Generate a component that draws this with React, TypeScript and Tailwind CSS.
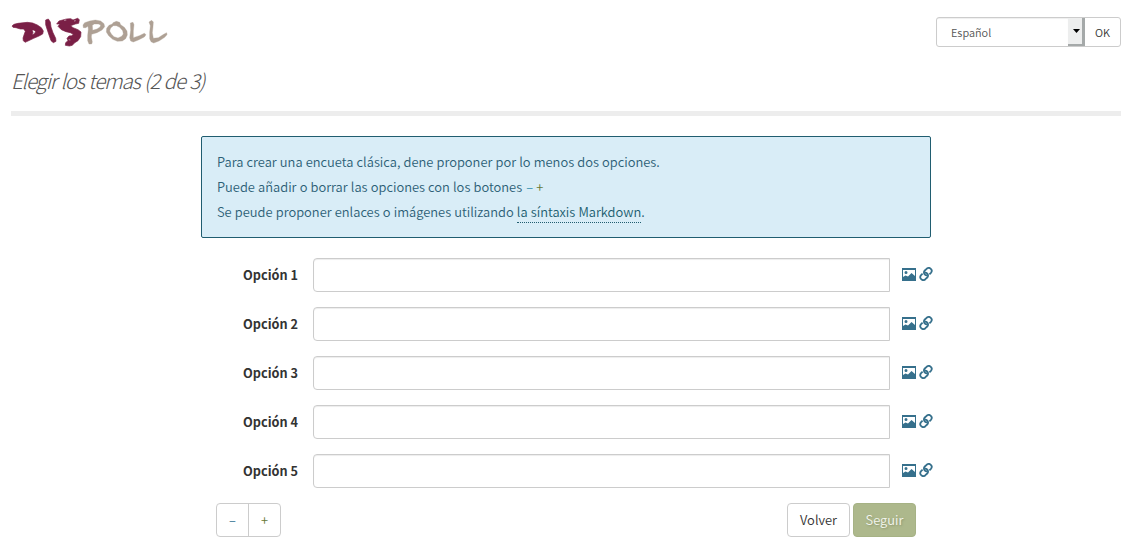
const options = [1, 2, 3, 4, 5];

function Logo() {
  return (
    <svg width="160" height="34" viewBox="30 30 480 102" role="img" aria-label="Dispoll" className="block">
      <g fill="#7a1f46" stroke="#7a1f46" strokeWidth="2" fillRule="evenodd" strokeLinejoin="round">
        <path d="M36 63L42 58L54 55L82 52L98 54L112 60L124 68L130 78L128 87L117 93L101 100L84 108L75 112L70 107L69 99L73 87L76 79L71 72L61 72L48 68L39 67ZM96 76L99 82L96 90L103 86L107 80L104 77L100 75Z" />
        <path d="M137 45L145 42L151 51L153 66L159 83L167 100L168 109L160 113L153 107L147 90L141 72L137 59Z" />
        <path d="M170 57L177 48L199 42L212 41L219 45L233 40L238 44L236 55L226 57L212 62L219 68L234 74L243 81L242 95L234 107L223 114L217 121L208 123L196 121L197 113L204 107L201 100L207 93L215 92L220 88L211 83L198 80L184 74L174 64L180 57Z" />
      </g>
      <path d="M192 46l7-1M222 48l5-1M206 104l5 1" fill="none" stroke="#fff" strokeWidth="1.5" />
      <g fill="#aea094" stroke="#aea094" strokeWidth="1" fillRule="evenodd">
        <path d="M249 60L254 53L269 48L286 45L302 48L312 56L314 65L306 75L291 83L275 88L274 96L277 111L275 117L267 117L263 107L263 91L265 73L264 64L257 68L250 68ZM277 61L278 76L291 72L300 66L302 60L295 57L283 57Z" />
        <path d="M339 53L349 49L359 52L362 59L373 67L381 78L382 90L377 101L367 108L352 109L338 103L326 92L319 81L320 70L327 61L337 57ZM340 62L332 69L329 78L334 87L342 95L354 99L365 94L370 87L368 77L359 67L349 62Z" />
        <path d="M391 54L399 52L402 59L400 78L400 98L418 92L433 85L438 89L433 96L415 105L400 111L392 108L389 98L392 76Z" />
        <path d="M447 51L455 46L460 51L459 65L457 83L460 100L475 98L491 88L500 83L501 89L494 97L477 108L461 114L453 110L449 101L449 82L451 62Z" />
      </g>
    </svg>
  );
}

function PictureIcon() {
  return (
    <svg width="14" height="13" viewBox="0 0 14 13" aria-hidden="true">
      <path fill="#36708c" fillRule="evenodd" d="M0 0H14V13H0ZM1 2V9L3.5 7.5L6 8.5L9.5 5L13 8V2ZM4 3A1.5 1.5 0 1 1 4 6A1.5 1.5 0 0 1 4 3Z" />
    </svg>
  );
}

function LinkIcon() {
  return (
    <svg width="14" height="14" viewBox="0 0 14 14" fill="none" stroke="#36708c" strokeWidth="1.8" aria-hidden="true">
      <path d="M8.6 8.7L6.2 7.9C4.5 6.5 4.6 4.7 5.8 3.5L7.6 1.8C9 .6 10.7.7 11.8 1.8C12.9 2.9 13 4.6 11.9 5.8L10.4 7.3" />
      <path d="M5.4 5.3L7.8 6.1C9.5 7.5 9.4 9.3 8.2 10.5L6.4 12.2C5 13.4 3.3 13.3 2.2 12.2C1.1 11.1 1 9.4 2.1 8.2L3.6 6.7" />
    </svg>
  );
}

export default function App() {
  return (
    <div className="h-[550px] w-[1130px] overflow-hidden bg-white pr-[9px] pl-[11px] font-['Noto_Sans_CJK_SC',sans-serif] text-[12.9px] font-[350] text-[#333]">
      <header className="h-[116px] border-b-[5px] border-[#ededed]">
        <div className="flex items-start justify-between">
          <div className="-ml-px pt-[15px]"><Logo /></div>
          <form className="mt-[17px] flex h-[30px] w-[185px] overflow-hidden rounded-[3px] border border-[#ccc] text-[10.9px]">
            <div className="flex w-[131px] items-center pl-[14px] text-[#555] shadow-[inset_0_1px_1px_#0001]">Español</div>
            <div className="flex w-[17px] items-center justify-center border-r-3 border-b-2 border-[#a5a9a9] bg-[#edeeee]">
              <svg width="7" height="4" viewBox="0 0 7 4" className="ml-0.5 shrink-0"><path d="M0 0H7L3.5 4Z" fill="#000" /></svg>
            </div>
            <button type="button" className="flex-1 text-[#333]">OK</button>
          </form>
        </div>
        <h1 className="mt-[15px] text-[20.5px] leading-8 font-extralight tracking-[-1.13px] [word-spacing:1px] whitespace-nowrap text-[#555] italic">Elegir los temas (2 de 3)</h1>
      </header>
      <main className="mt-5 ml-[190px] w-[732px]">
        <section className="h-[102px] w-[730px] rounded-[2px] border border-[#205d70] bg-[#d9edf7] px-[15px] pt-3 leading-[25px] [word-spacing:0.25px] text-[#2c5f76]">
          <p>Para crear una encueta clásica, dene proponer por lo menos dos opciones.</p>
          <p>Puede añadir o borrar las opciones con los botones <span className="ml-px text-[#318eae]">–</span> <span className="text-[#677835]">+</span></p>
          <p>Se peude proponer enlaces o imágenes utilizando <a className="border-b border-dotted border-[#205d70] pb-px text-[#205d70]">la síntaxis Markdown</a>.</p>
        </section>
        <div className="mt-5 flex flex-col gap-[15px]">
          {options.map((n) => (
            <div key={n} className="flex h-[34px] items-center">
              <label htmlFor={`option-${n}`} className="w-[97px] text-right text-[12.7px] font-bold">Opción {n}</label>
              <input id={`option-${n}`} className="ml-[15px] h-[34px] w-[577px] rounded-l-[4px] border border-[#ccc] px-3 shadow-[inset_0_1px_1px_rgba(0,0,0,0.075)]" />
              <div className="ml-3 flex items-center gap-[3px] pb-[2px]"><PictureIcon /><LinkIcon /></div>
            </div>
          ))}
        </div>
        <div className="mt-[15px] flex h-[34px] w-[715px] justify-between pl-[15px]">
          <div className="flex w-[65px] rounded-[4px] border border-[#ccc]">
            <button type="button" className="w-8 border-r border-[#ccc] text-[#31708f]">–</button>
            <button type="button" className="flex-1 text-[#677835]">+</button>
          </div>
          <div className="flex gap-[3px]">
            <button type="button" className="w-[63px] rounded-[4px] border border-[#ccc]">Volver</button>
            <button type="button" className="w-[63px] rounded-[4px] border border-[#a6b285] bg-[#adb88c] text-[#f3f5ee] [text-shadow:1px_1px_2px_#8c976e]">Seguir</button>
          </div>
        </div>
      </main>
    </div>
  );
}
